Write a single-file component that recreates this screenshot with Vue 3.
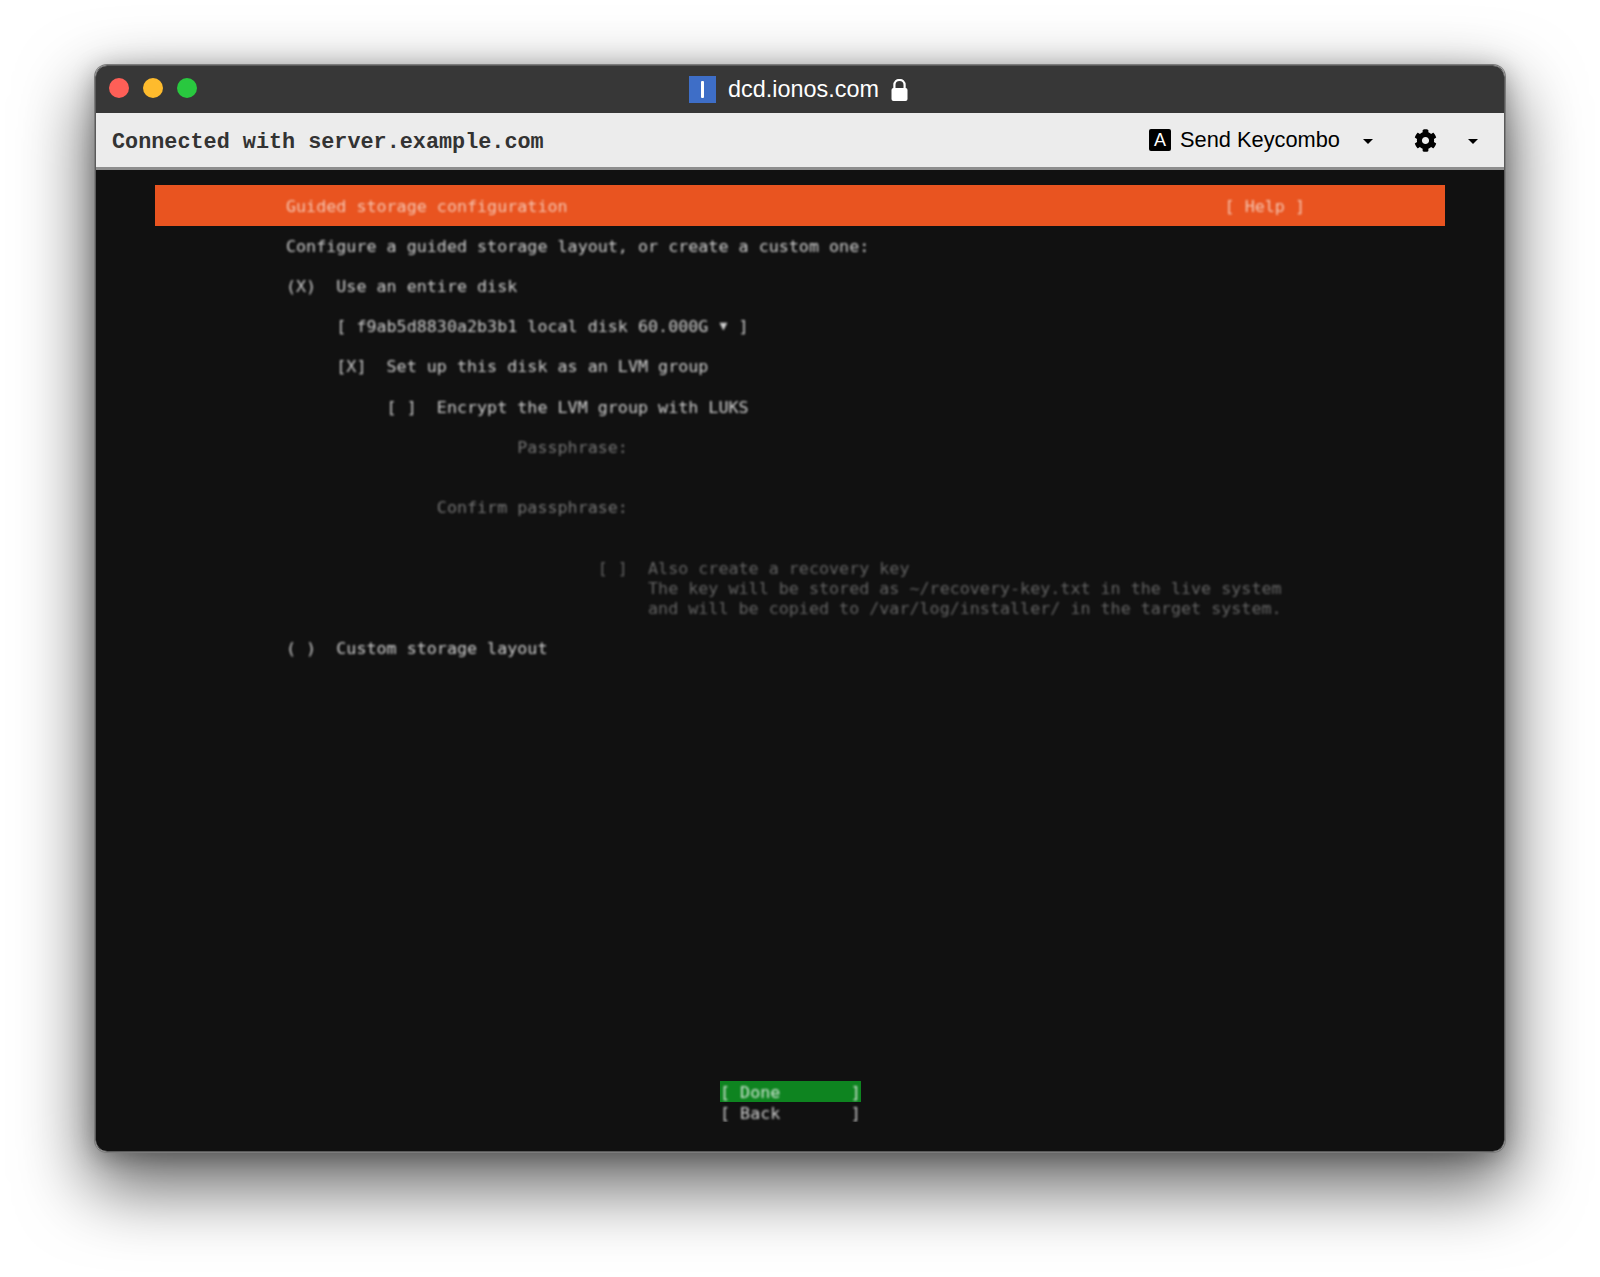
<script setup>
const rows = [
  { id: 1, text: 'Configure a guided storage layout, or create a custom one:', gap: 1 },
  { id: 2, text: '(X)  Use an entire disk', gap: 1 },
  { id: 3, text: '     [ f9ab5d8830a2b3b1 local disk 60.000G ', mark: '▼', after: ' ]', gap: 1 },
  { id: 4, text: '     [X]  Set up this disk as an LVM group', gap: 1 },
  { id: 5, text: '          [ ]  Encrypt the LVM group with LUKS', gap: 1 },
  { id: 6, text: '                       Passphrase:', gap: 2, tone: 'muted' },
  { id: 7, text: '               Confirm passphrase:', gap: 2, tone: 'muted' },
  { id: 8, text: '                               [ ]  Also create a recovery key', gap: 0, tone: 'faint' },
  { id: 9, text: '                                    The key will be stored as ~/recovery-key.txt in the live system', gap: 0, tone: 'faint' },
  { id: 10, text: '                                    and will be copied to /var/log/installer/ in the target system.', gap: 1, tone: 'faint' },
  { id: 11, text: '( )  Custom storage layout', gap: 0 }
]
const buttons = [
  { id: 'done', text: '[ Done       ]', on: true },
  { id: 'back', text: '[ Back       ]', on: false }
]
</script>

<template>
  <div class="page">
    <div class="window">
      <header class="titlebar">
        <div class="lights">
          <span class="light red"></span>
          <span class="light amber"></span>
          <span class="light green"></span>
        </div>
        <div class="title">
          <span class="favicon"><i></i></span>
          <span>dcd.ionos.com</span>
          <svg class="lock" viewBox="0 0 17 22" aria-hidden="true">
            <path d="M3.4 10V6a5.1 5.1 0 0 1 10.2 0V10" fill="none" stroke="#fff" stroke-width="2.2"/>
            <rect x="0.5" y="9" width="16" height="13" rx="2" fill="#fff"/>
          </svg>
        </div>
      </header>
      <div class="toolbar">
        <span class="connected">Connected with server.example.com</span>
        <div class="actions">
          <span class="key">A</span>
          <span class="combo">Send Keycombo</span>
          <span class="caret first"></span>
          <svg class="gear" viewBox="0 0 512 512" aria-hidden="true">
            <path d="M487.4 315.7l-42.6-24.6c4.3-23.2 4.3-47 0-70.2l42.6-24.6c4.9-2.8 7.1-8.6 5.5-14-11.1-35.6-30-67.8-54.7-94.6-3.8-4.1-10-5.1-14.8-2.3L380.8 110c-17.9-15.4-38.5-27.3-60.8-35.1V25.8c0-5.6-3.9-10.5-9.4-11.7-36.7-8.2-74.3-7.8-109.2 0-5.5 1.2-9.4 6.1-9.4 11.7V75c-22.2 7.9-42.8 19.8-60.8 35.1L88.7 85.5c-4.9-2.8-11-1.9-14.8 2.3-24.7 26.7-43.6 58.9-54.7 94.6-1.7 5.4.6 11.2 5.5 14L67.3 221c-4.3 23.2-4.3 47 0 70.2l-42.6 24.6c-4.9 2.8-7.1 8.6-5.5 14 11.1 35.6 30 67.8 54.7 94.6 3.8 4.1 10 5.1 14.8 2.3l42.6-24.6c17.9 15.4 38.5 27.3 60.8 35.1v49.2c0 5.6 3.9 10.5 9.4 11.7 36.7 8.2 74.3 7.8 109.2 0 5.5-1.2 9.4-6.1 9.4-11.7v-49.2c22.2-7.9 42.8-19.8 60.8-35.1l42.6 24.6c4.9 2.8 11 1.9 14.8-2.3 24.7-26.7 43.6-58.9 54.7-94.6 1.5-5.5-.7-11.3-5.6-14.1zM256 336c-44.1 0-80-35.9-80-80s35.9-80 80-80 80 35.9 80 80-35.9 80-80 80z"/>
          </svg>
          <span class="caret"></span>
        </div>
      </div>
      <main class="terminal">
        <div class="banner">
          <span>Guided storage configuration</span>
          <span class="help">[ Help ]</span>
        </div>
        <div class="form">
          <div
            v-for="row in rows"
            :key="row.id"
            class="row"
            :class="[row.tone, 'gap-' + row.gap]"
          >{{ row.text }}<span v-if="row.mark" class="mark">{{ row.mark }}</span>{{ row.after }}</div>
        </div>
        <div class="buttons">
          <div v-for="b in buttons" :key="b.id" class="btn" :class="{ on: b.on }"><span>{{ b.text }}</span></div>
        </div>
      </main>
    </div>
  </div>
</template>

<style>
html, body { background: #fff; }
</style>

<style scoped>
.page {
  width: 1600px;
  height: 1277px;
  box-sizing: border-box;
  padding: 65px 95px 0 95px;
  background: #fff;
  overflow: hidden;
}
.window {
  box-sizing: border-box;
  width: 1410px;
  height: 1087px;
  display: flex;
  flex-direction: column;
  border: 1px solid #5a5a5a;
  border-radius: 12px;
  overflow: hidden;
  box-shadow: 0 0 0 1px #7c7c7c, 0 30px 70px 6px rgba(0,0,0,.6), 0 4px 24px rgba(0,0,0,.3);
}
.titlebar {
  height: 47px;
  flex: none;
  background: #373737;
  display: grid;
  grid-template-columns: 1fr auto 1fr;
  align-items: center;
}
.lights {
  padding: 0 0 3px 13px;
  display: flex;
  gap: 14px;
}
.light { width: 20px; height: 20px; border-radius: 50%; }
.red { background: #fe5f57; }
.amber { background: #febb2d; }
.green { background: #29c83f; }
.title {
  display: flex;
  align-items: center;
  margin-right: 3px;
  color: #fff;
  font: 23.4px "Liberation Sans", Arial, sans-serif;
}
.favicon {
  width: 27px;
  height: 27px;
  margin-right: 12px;
  background: #3e6ec7;
  display: flex;
  align-items: center;
  justify-content: center;
}
.favicon i { display: block; width: 3px; height: 17px; background: #fff; border-radius: 1px; }
.lock { width: 17px; height: 22px; margin-left: 12px; }
.toolbar {
  height: 57px;
  flex: none;
  box-sizing: border-box;
  background: #ececec;
  border-bottom: 3px solid #8e8e8e;
  display: flex;
  align-items: center;
  justify-content: space-between;
  padding: 0 26px 0 16px;
}
.connected {
  font: bold 21.8px "Liberation Mono", "Courier New", monospace;
  color: #333;
  padding-top: 5px;
}
.actions { display: flex; align-items: center; color: #000; }
.key {
  width: 22px;
  height: 22px;
  border-radius: 2px;
  background: #000;
  color: #fff;
  font: 18px/22px "Liberation Sans", Arial, sans-serif;
  text-align: center;
}
.combo {
  font: 21.8px "Liberation Sans", Arial, sans-serif;
  margin-left: 9px;
}
.caret {
  width: 0;
  height: 0;
  border-left: 5.5px solid transparent;
  border-right: 5.5px solid transparent;
  border-top: 5.5px solid #000;
  margin-top: 2px;
}
.caret.first { margin-left: 23px; }
.gear { width: 23px; height: 23px; margin: 0 31px 0 41px; }
.terminal {
  flex: 1;
  min-height: 0;
  background: #111;
  display: flex;
  flex-direction: column;
  padding: 15px 59px 29px;
  font: 16.72px/20.15px "DejaVu Sans Mono", "Liberation Mono", monospace;
  color: #cfcfcf;
}
.banner {
  height: 39.5px;
  flex: none;
  background: #e95420;
  color: #f5c6b2;
  display: flex;
  align-items: center;
  padding: 1px 0 0 131px;
}
.banner span { filter: blur(.8px); }
.help { margin-left: 657px; }
.form {
  margin: 10px 0 0 131px;
  filter: blur(.8px);
}
.row { height: 20.15px; white-space: pre; }
.gap-1 { margin-bottom: 20.15px; }
.gap-2 { margin-bottom: 40.3px; }
.muted { color: #757575; }
.faint { color: #636363; }
.mark { display: inline-block; width: 10.06px; font-size: 13px; vertical-align: 2px; text-align: center; }
.buttons {
  margin: auto 0 0 565px;
  width: 141px;
}
.btn {
  height: 20.5px;
  white-space: pre;
  box-sizing: border-box;
  padding-top: 1px;
  overflow: hidden;
}
.btn span { display: block; filter: blur(.8px); }
.btn.on { background: #0e8420; color: #d5e6d8; }
</style>
